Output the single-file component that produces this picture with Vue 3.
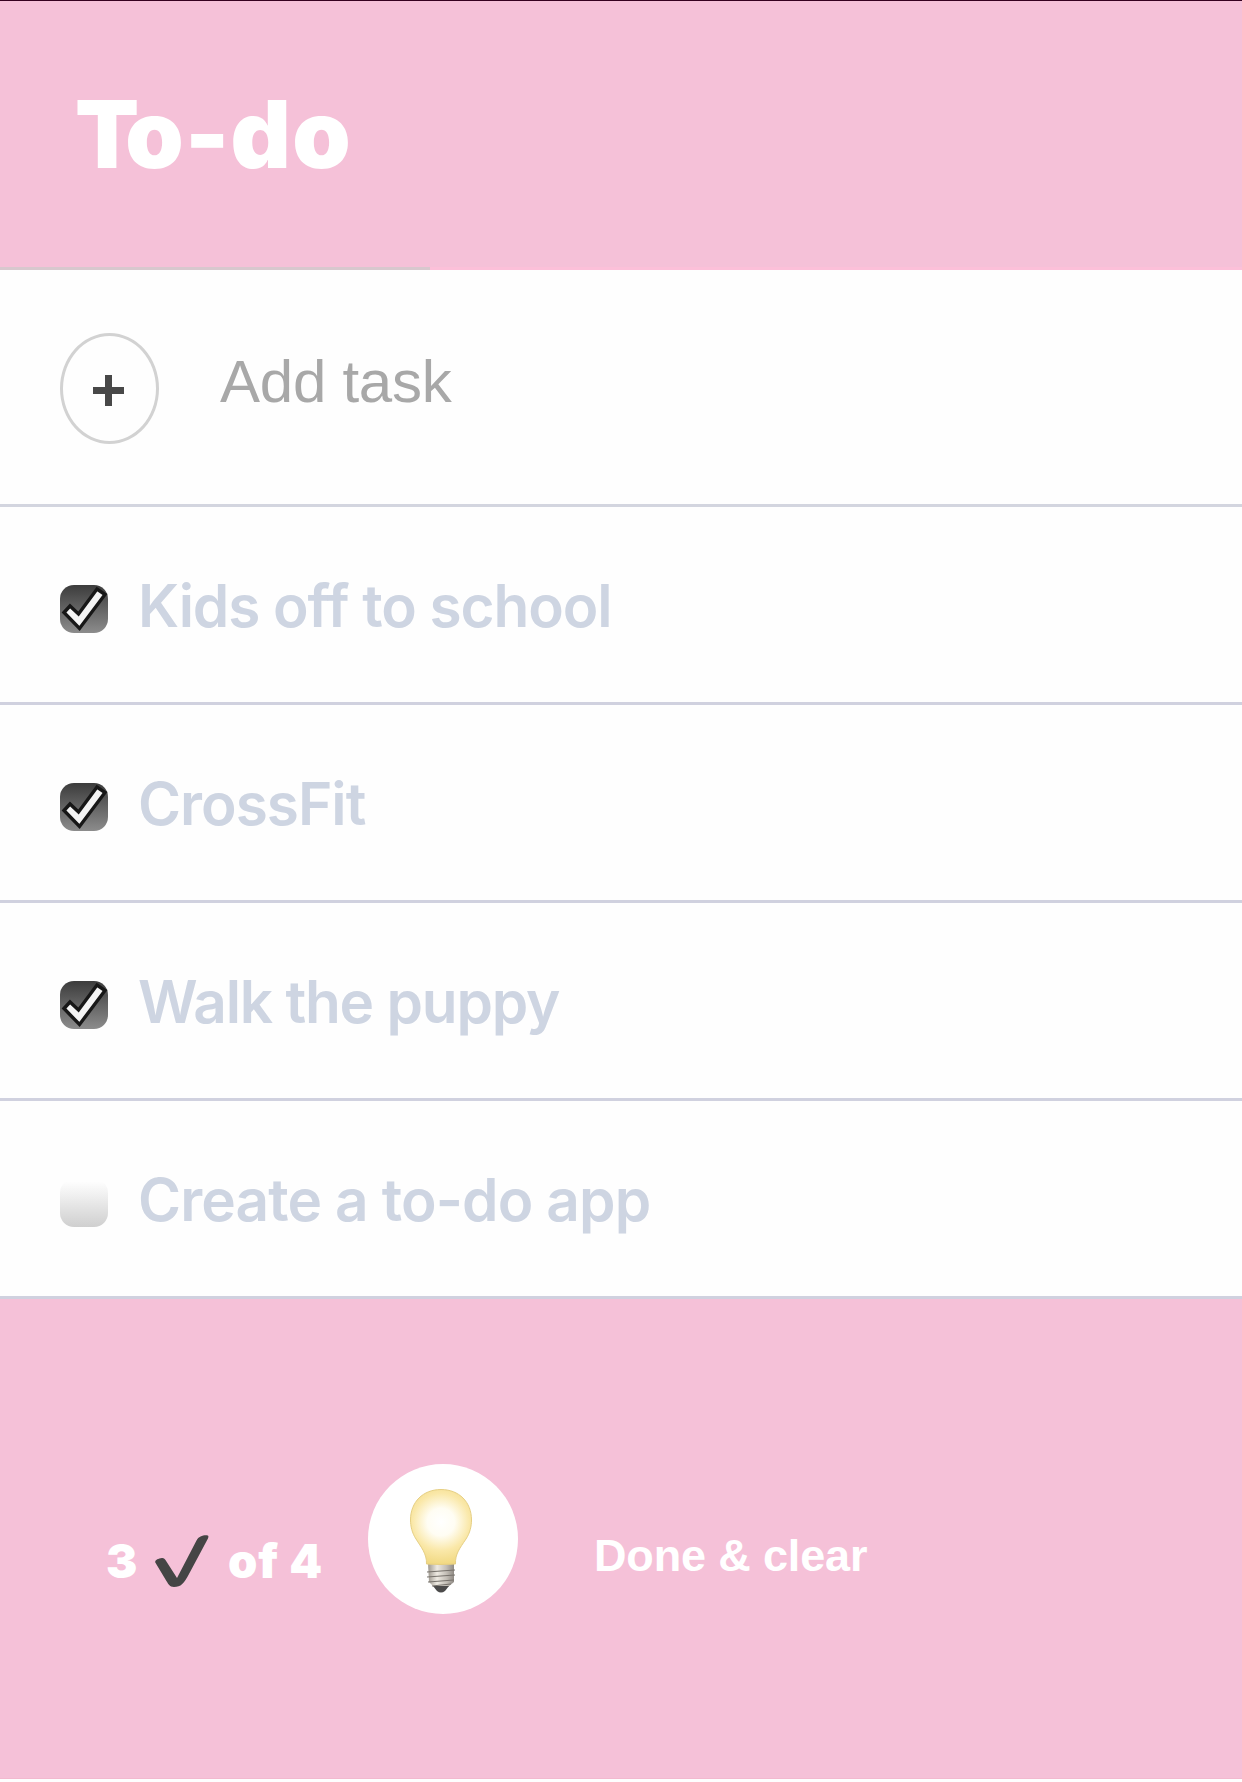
<script setup>
import { ref, computed } from 'vue'

const tasks = ref([
  { id: 1, text: 'Kids off to school', done: true, cls: 'kids' },
  { id: 2, text: 'CrossFit', done: true, cls: 'cross' },
  { id: 3, text: 'Walk the puppy', done: true, cls: 'walk' },
  { id: 4, text: 'Create a to-do app', done: false, cls: 'create' },
])
const doneCount = computed(() => tasks.value.filter((t) => t.done).length)
function clearDone() {
  tasks.value = tasks.value.filter((t) => !t.done)
}
</script>

<template>
  <main class="app">
    <header class="header">
      <h1><span class="initial">T</span>o-do</h1>
      <div class="progress"></div>
    </header>

    <form class="add" @submit.prevent>
      <button class="plus" type="button" aria-label="Add">
        <svg width="31" height="31" viewBox="0 0 31 31"><path d="M12 0h7v12h12v7H19v12h-7V19H0v-7h12z" fill="#484848" /></svg>
      </button>
      <span class="placeholder">Add task</span>
    </form>

    <ul class="list">
      <li v-for="task in tasks" :key="task.id" @click="task.done = !task.done">
        <span class="box" :class="{ checked: task.done }">
          <svg v-if="task.done" width="48" height="48" viewBox="0 0 48 48">
            <path d="M4 27.500L10 21L18.500 29L37 4L45 9.500L19.500 43.500Z" fill="#f4f4f4" stroke="#171717" stroke-width="3.400" />
          </svg>
        </span>
        <span class="label" :class="task.cls">{{ task.text }}</span>
      </li>
    </ul>

    <footer class="footer">
      <div class="count">
        <span class="num">{{ doneCount }}</span>
        <svg class="tick" width="54" height="53" viewBox="0 0 54 53">
          <path d="M0.300 27.500C-0.500 25.500 3 23.300 7 23C9 22.900 9.800 24 10.800 25.500L22 43L41.500 5.500C43.500 1.500 48 0 52 0.300C53.800 0.500 53.700 2 52.700 4L34 39C29 48.500 26 52 19 52C14.500 52 13 48.500 10.500 44.500Z" fill="#454545" />
        </svg>
        <span class="total">of {{ tasks.length }}</span>
      </div>
      <div class="idea">
        <svg width="64" height="106" viewBox="0 0 64 106">
          <defs>
            <radialGradient id="glass" gradientUnits="userSpaceOnUse" cx="32" cy="34" r="46">
              <stop offset="0" stop-color="#ffffff" />
              <stop offset=".3" stop-color="#fffdf3" />
              <stop offset=".62" stop-color="#fae8a9" />
              <stop offset="1" stop-color="#efd578" />
            </radialGradient>
            <linearGradient id="metal">
              <stop offset="0" stop-color="#9d978e" />
              <stop offset=".35" stop-color="#eeeae2" />
              <stop offset=".7" stop-color="#c4bfb7" />
              <stop offset="1" stop-color="#8f8a84" />
            </linearGradient>
          </defs>
          <path d="M19 75H45V94L39 99H25L20 94Z" fill="url(#metal)" />
          <path d="M24 98H40L36 103Q32 106 28 103Z" fill="#4b4a4a" />
          <path d="M18 84L46 82M18 89L46 87M19 94L45 92M23 98L42 96" stroke="#77726c" stroke-width="1" />
          <path d="M17.500 76C18 66 12 59 7 51C3 45 1.500 38 1.500 32C1.500 14 14 1.500 32 1.500S62.500 14 62.500 32C62.500 38 61 45 57 51C51 60 46 66 46.500 76Q32 77 17.500 76Z" fill="url(#glass)" stroke="#e6cf83" stroke-width="1" />
        </svg>
      </div>
      <button class="clear" type="button" @click="clearDone">Done &amp; clear</button>
    </footer>
  </main>
</template>

<style>
body {
  margin: 0;
  background: #fefefe;
}
</style>

<style scoped>
* {
  box-sizing: border-box;
}
.app {
  height: 1782px;
  overflow: hidden;
  display: flex;
  flex-direction: column;
  font-family: Inter, sans-serif;
  background: #fefefe;
}
.header {
  height: 270px;
  flex: none;
  background: #f5c1d8;
  border-top: 1px solid #35001f;
  display: flex;
  flex-direction: column;
  justify-content: space-between;
}
h1 {
  margin: 76px 0 0 75px;
  font-size: 93.500px;
  line-height: 114px;
  font-weight: 900;
  letter-spacing: 1.300px;
  color: #fff;
}
.initial {
  letter-spacing: -14px;
}
.progress {
  height: 3px;
  background: linear-gradient(90deg, #d8c8ce 430px, #fcc0d9 430px);
}
.add {
  height: 237px;
  flex: none;
  border-bottom: 3px solid #d3d5df;
  display: flex;
  align-items: flex-start;
  padding: 63px 0 0 60px;
}
.plus {
  width: 99px;
  height: 111px;
  border: 3px solid #d2d2d2;
  border-radius: 50%;
  background: #fefefe;
  display: flex;
  align-items: center;
  justify-content: center;
  padding: 4px 2px 0 0;
}
.placeholder {
  margin: 16px 0 0 61px;
  font: 60px/66px "Liberation Sans", Arial, sans-serif;
  letter-spacing: -0.250px;
  color: #a8a8a8;
}
.list {
  margin: 0;
  padding: 0;
  list-style: none;
}
li {
  height: 198px;
  border-bottom: 3px solid #d0d1df;
  display: flex;
  align-items: flex-start;
  padding: 78px 0 0 60px;
}
.box {
  width: 48px;
  height: 48px;
  border-radius: 14px;
  background: linear-gradient(#fefefe 5%, #cfcfcf);
}
.box.checked {
  background: linear-gradient(#3c3c3c, #8c8c8c);
}
.box svg {
  display: block;
}
.label {
  margin: -15px 0 0 30px;
  font-size: 58.500px;
  line-height: 72px;
  font-weight: 600;
  font-variant-ligatures: none;
  font-feature-settings: "calt" 0;
  color: #ced5e2;
  white-space: nowrap;
}
.kids {
  letter-spacing: -1.070px;
}
.cross {
  letter-spacing: -1px;
}
.walk {
  letter-spacing: -1.200px;
}
.create {
  letter-spacing: -0.870px;
}
.footer {
  height: 480px;
  flex: none;
  background: #f5c1d8;
  border-bottom: 1px solid #f3b9cf;
  display: flex;
  align-items: flex-start;
  color: #fff;
}
.count {
  width: 368px;
  margin-top: 232px;
  padding-left: 106px;
  display: flex;
  align-items: flex-start;
  font-size: 47px;
  line-height: 60px;
  font-weight: 900;
}
.num {
  width: 49px;
}
.tick {
  margin-top: 4px;
}
.total {
  margin-left: 19px;
  letter-spacing: 0.900px;
  white-space: nowrap;
}
.idea {
  width: 150px;
  height: 150px;
  margin-top: 165px;
  border-radius: 50%;
  background: #fff;
  display: flex;
  justify-content: center;
  padding: 24px 4px 0 0;
}
.clear {
  margin: 231px 0 0 76px;
  padding: 0;
  border: 0;
  background: none;
  color: #fff;
  font: bold 45px/52px "Liberation Sans", Arial, sans-serif;
  letter-spacing: -0.150px;
}
</style>
